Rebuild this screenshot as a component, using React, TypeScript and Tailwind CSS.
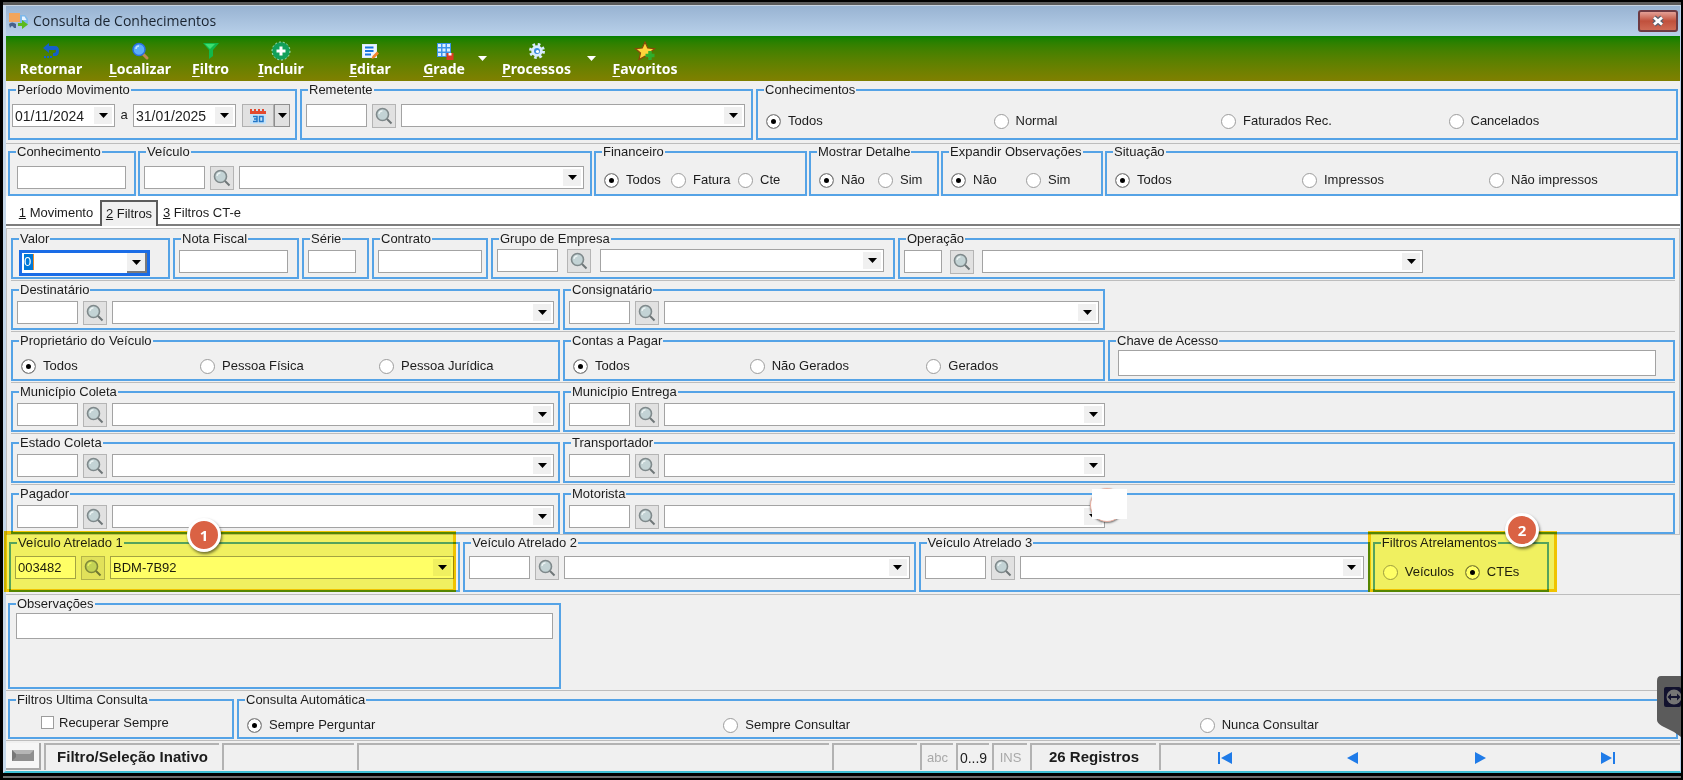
import type { ReactNode } from "react";
import clsx from "clsx";

interface GroupProps {
  title: string;
  className?: string;
  children?: ReactNode;
}

function Group({ title, className, children }: GroupProps) {
  return (
    <fieldset className={clsx("relative min-w-0 border-2 border-[#55a3e6]", className)}>
      <legend className="ml-1.5 px-px leading-4 whitespace-nowrap">{title}</legend>
      {children}
    </fieldset>
  );
}

function Arrow({ className = "text-black" }: { className?: string }) {
  return (
    <svg width="9" height="5" viewBox="0 0 9 5" className={className} aria-hidden="true">
      <path d="M0 0H9L4.5 5Z" fill="currentColor" />
    </svg>
  );
}

interface TextBoxProps {
  label: string;
  value?: string;
  className?: string;
}

function TextBox({ label, value = "", className }: TextBoxProps) {
  return (
    <input
      type="text"
      aria-label={label}
      defaultValue={value}
      className={clsx("h-[23px] min-w-0 border border-[#a3a3a3] bg-white px-0.5 outline-none", className)}
    />
  );
}

function Combo({ label, value = "", className }: TextBoxProps) {
  return (
    <div className={clsx("relative h-[23px] min-w-0", className)}>
      <select
        aria-label={label}
        className="h-full w-full appearance-none border border-[#a3a3a3] bg-white px-0.5 leading-5 outline-none"
      >
        <option>{value}</option>
      </select>
      <span className="pointer-events-none absolute top-[3px] right-[3px] flex h-[17px] w-[18px] items-center justify-center bg-[#f0f0f0]">
        <Arrow />
      </span>
    </div>
  );
}

function SearchButton({ label }: { label: string }) {
  return (
    <button
      type="button"
      aria-label={`Pesquisar ${label}`}
      className="flex size-6 shrink-0 items-center justify-center border border-[#b4b4b4] bg-[#e1e1e1]"
    >
      <svg width="20" height="20" viewBox="0 0 20 20" aria-hidden="true">
        <path d="M12.5 12.5L17.5 17.5" stroke="#6f7678" strokeWidth="2" />
        <circle cx="8.5" cy="8.5" r="6" fill="#c3d3d5" stroke="#7f898b" strokeWidth="1.6" />
        <path d="M5 8A3.6 3.6 0 0 1 8.5 4.8" stroke="#eef5f5" strokeWidth="1.2" fill="none" />
      </svg>
    </button>
  );
}

interface LookupProps {
  label: string;
  code?: string;
  value?: string;
  className?: string;
  codeClass?: string;
  comboClass?: string;
}

function Lookup({
  label,
  code,
  value,
  className = "gap-[5px]",
  codeClass = "w-[61px]",
  comboClass = "flex-1",
}: LookupProps) {
  return (
    <div className={clsx("flex items-start px-1", className)}>
      <TextBox label={`${label} código`} value={code} className={clsx("shrink-0", codeClass)} />
      <SearchButton label={label} />
      <Combo label={label} value={value} className={comboClass} />
    </div>
  );
}

interface RadiosProps {
  name: string;
  options: string[];
  selected?: number;
  className: string;
}

function Radios({ name, options, selected = 0, className }: RadiosProps) {
  return (
    <div className={clsx("grid auto-cols-fr grid-flow-col pl-2", className)}>
      {options.map((option, i) => (
        <label key={option} className="flex h-4 items-center gap-[7px] whitespace-nowrap">
          <input
            type="radio"
            name={name}
            defaultChecked={i === selected}
            className="size-[15px] shrink-0 appearance-none rounded-full border border-[#9c9c9c] bg-white checked:bg-black checked:shadow-[inset_0_0_0_4px_#fff]"
          />
          {option}
        </label>
      ))}
    </div>
  );
}

function Callout({ n, className }: { n: number; className: string }) {
  return (
    <span
      className={clsx(
        "absolute z-20 flex size-[34px] items-center justify-center rounded-full border-[3px] border-white bg-[#da6244] font-['Open_Sans',sans-serif] text-[15px] font-bold text-white shadow-[1px_2px_3px_#0008]",
        className
      )}
    >
      {n}
    </span>
  );
}

function Rule() {
  return <div className="h-px bg-[#bdbdbd]" />;
}

const icons = {
  retornar: (
    <svg width="20" height="20" viewBox="0 0 20 20">
      <path d="M2 7L8 2V5H14Q18 5 18 10T14 15H12V12H13Q15 12 15 10T13 9H8V12Z" fill="#1560c8" />
      <path d="M3 16H12" stroke="#1560c8" strokeWidth="2" strokeDasharray="2 1" />
    </svg>
  ),
  localizar: (
    <svg width="20" height="20" viewBox="0 0 20 20">
      <path d="M12 12L17 17" stroke="#c08a52" strokeWidth="3" strokeLinecap="round" />
      <circle cx="9" cy="8.5" r="6" fill="#5aaef8" stroke="#2a6fe0" strokeWidth="1.5" />
      <path d="M6 8A3 3 0 0 1 9 5" stroke="#bfe0ff" strokeWidth="1.5" fill="none" />
    </svg>
  ),
  filtro: (
    <svg width="20" height="20" viewBox="0 0 20 20">
      <path d="M2 2H18L12 9V15L8 18V9Z" fill="#12b84a" />
      <path d="M4 3H14L9 8Z" fill="#3ce070" />
    </svg>
  ),
  incluir: (
    <svg width="20" height="20" viewBox="0 0 20 20">
      <circle cx="10" cy="10" r="9" fill="#12a05a" stroke="#a7e3c0" strokeWidth="1" strokeDasharray="2 2" />
      <path d="M10 5.5V14.5M5.5 10H14.5" stroke="#fff" strokeWidth="3" />
    </svg>
  ),
  editar: (
    <svg width="20" height="20" viewBox="0 0 20 20">
      <rect x="2.5" y="3.500" width="14" height="13" fill="#eef6ff" stroke="#dcecff" />
      <path d="M5 6.500H13.500M5 13.500H11M5 10H13.500" stroke="#1976e0" strokeWidth="2" />
      <path d="M11.500 18L12.500 15L17 10.500L19 12.500L14.500 17Z" fill="#f2862c" />
    </svg>
  ),
  grade: (
    <svg width="20" height="20" viewBox="0 0 20 20">
      <rect x="3" y="2" width="14" height="14" fill="#3c94ea" />
      <path
        d="M4 3h3v3H4zM8.5 3h3v3h-3zM13 3h3v3h-3zM4 7.5h3v3H4zM8.5 7.5h3v3h-3zM13 7.5h3v3h-3zM4 12h3v3H4zM8.5 12h3v3h-3z"
        fill="#dcefff"
      />
      <rect x="12.500" y="12" width="7" height="7" fill="#dc3b22" />
      <path d="M14.500 12H17.500V14.500H14.500Z" fill="#fff" />
    </svg>
  ),
  processos: (
    <svg width="20" height="20" viewBox="0 0 20 20">
      <circle cx="10" cy="10" r="6.500" fill="none" stroke="#d8ecff" strokeWidth="3" strokeDasharray="2.550 2.550" />
      <circle cx="10" cy="10" r="4" fill="none" stroke="#d8ecff" strokeWidth="3.500" />
      <circle cx="10" cy="10" r="3" fill="#3b8ce0" />
      <circle cx="10.500" cy="10.500" r="1.600" fill="#fff" />
    </svg>
  ),
  favoritos: (
    <svg width="22" height="20" viewBox="0 0 22 20">
      <path
        d="M11 1L13.700 7L20.500 7.700L15.500 12L17 18.500L11 15.200L5 18.500L6.500 12L1.500 7.700L8.300 7Z"
        fill="#ffd43a"
        stroke="#8a4a08"
        strokeWidth="1.200"
      />
      <path d="M16 10V19M11.500 14.500H20.500" stroke="#2fae2c" strokeWidth="3.500" />
    </svg>
  ),
};

interface ToolProps {
  icon: ReactNode;
  hot?: string;
  text: string;
  className: string;
}

function Tool({ icon, hot, text, className }: ToolProps) {
  return (
    <button type="button" className={clsx("flex shrink-0 flex-col items-center pt-[5px]", className)}>
      {icon}
      <span className="leading-4">
        {hot && <u className="underline-offset-2">{hot}</u>}
        {text}
      </span>
    </button>
  );
}

function ToolArrow({ label }: { label: string }) {
  return (
    <button type="button" aria-label={label} className="flex w-[18px] shrink-0 items-center justify-center">
      <Arrow className="text-white" />
    </button>
  );
}

function TitleBar() {
  return (
    <header className="flex h-[30px] items-center bg-linear-to-b from-[#98b3d2] to-[#b9d1ea] pr-0.5 pl-[3px]">
      <svg width="20" height="18" viewBox="0 0 20 18" aria-hidden="true">
        <rect x="0" y="1" width="11" height="9" fill="#f2a55c" />
        <path d="M11 3H16L19 7V12H11Z" fill="#7db8ea" />
        <path d="M13 4.5H15.5L17.5 8H13Z" fill="#e8f4ff" />
        <path d="M0 12Q3 9 7 12V16H5Q3 12 1 16Z" fill="#47618a" />
        <path d="M9 11H13V8L19 12.5L13 17V14H9Z" fill="#5cba1c" />
      </svg>
      <h1 className="ml-1 flex-1 font-['Open_Sans',sans-serif] text-sm text-[#1a2430]">
        Consulta de Conhecimentos
      </h1>
      <button
        type="button"
        aria-label="Fechar"
        className="flex h-[22px] w-10 items-center justify-center rounded-[3px] border-2 border-[#6d3a42] bg-linear-to-b from-[#e3a096] via-[#c0503c] to-[#cf6a55]"
      >
        <svg width="14" height="12" viewBox="0 0 14 12" aria-hidden="true">
          <path d="M3 2.5L11 9.5M11 2.5L3 9.5" stroke="#56606e" strokeWidth="5" />
          <path d="M3 2.5L11 9.5M11 2.5L3 9.5" stroke="#fff" strokeWidth="2.8" />
        </svg>
      </button>
    </header>
  );
}

function Toolbar() {
  return (
    <div className="flex h-[45px] items-stretch bg-linear-to-b from-[#008000] to-[#808000] font-['Noto_Sans',sans-serif] text-sm font-bold text-white">
      <Tool icon={icons.retornar} text="Retornar" className="w-[90px]" />
      <Tool icon={icons.localizar} hot="L" text="ocalizar" className="w-[88px]" />
      <Tool icon={icons.filtro} hot="F" text="iltro" className="w-[53px]" />
      <Tool icon={icons.incluir} hot="I" text="ncluir" className="w-[88px]" />
      <Tool icon={icons.editar} hot="E" text="ditar" className="w-[90px]" />
      <Tool icon={icons.grade} hot="G" text="rade" className="w-[58px]" />
      <ToolArrow label="Opções de grade" />
      <Tool icon={icons.processos} hot="P" text="rocessos" className="w-[91px]" />
      <ToolArrow label="Opções de processos" />
      <Tool icon={icons.favoritos} hot="F" text="avoritos" className="w-[90px]" />
    </div>
  );
}

function HeaderFilters() {
  return (
    <>
      <div className="grid grid-cols-[289fr_453fr_922fr] gap-[3px] px-0.5 pt-px pb-[3px]">
        <Group title="Período Movimento" className="h-[58px]">
          <div className="flex items-start px-0.5 pt-1.5">
            <Combo label="Data inicial" value="01/11/2024" className="w-[103px] text-sm" />
            <span className="w-[18px] text-center leading-[22px]">a</span>
            <Combo label="Data final" value="31/01/2025" className="w-[103px] text-sm" />
            <button
              type="button"
              aria-label="Calendário"
              className="ml-1.5 flex h-[23px] w-8 items-center justify-center border border-[#b0b0b0] bg-[#e1e1e1]"
            >
              <svg width="16" height="16" viewBox="0 0 16 16" aria-hidden="true">
                <rect x="0" y="2" width="16" height="14" fill="#c4e2f8" />
                <path d="M0 1H2V3H4V1H6V3H8V1H10V3H12V1H14V3H16V6H0Z" fill="#e2492f" />
                <path
                  d="M3 8.5H7V13.5H3M4 11H7M9.5 8.5H13V13.5H9.5Z"
                  fill="none"
                  stroke="#2277c8"
                  strokeWidth="1.5"
                />
              </svg>
            </button>
            <button
              type="button"
              aria-label="Opções do calendário"
              className="flex h-[23px] w-4 items-center justify-center border border-[#8f8f8f] bg-[#e1e1e1]"
            >
              <Arrow />
            </button>
          </div>
        </Group>
        <Group title="Remetente">
          <Lookup label="Remetente" className="gap-[5px] pt-1.5 pr-1.5" />
        </Group>
        <Group title="Conhecimentos">
          <Radios
            name="conhecimentos"
            options={["Todos", "Normal", "Faturados Rec.", "Cancelados"]}
            className="pt-[15px]"
          />
        </Group>
      </div>
      <Rule />
      <div className="grid grid-cols-[128fr_454fr_213fr_130fr_162fr_573fr] gap-0.5 px-0.5">
        <Group title="Conhecimento" className="h-[52px]">
          <div className="flex px-[7px] pt-1.5">
            <TextBox label="Conhecimento" className="w-[109px]" />
          </div>
        </Group>
        <Group title="Veículo">
          <Lookup label="Veículo" className="gap-[5px] pt-1.5 pr-1.5" />
        </Group>
        <Group title="Financeiro">
          <Radios name="financeiro" options={["Todos", "Fatura", "Cte"]} className="pt-3" />
        </Group>
        <Group title="Mostrar Detalhe">
          <Radios name="detalhe" options={["Não", "Sim"]} className="pt-3" />
        </Group>
        <Group title="Expandir Observações">
          <Radios name="expandir" options={["Não", "Sim"]} className="pt-3" />
        </Group>
        <Group title="Situação">
          <Radios name="situacao" options={["Todos", "Impressos", "Não impressos"]} className="pt-3" />
        </Group>
      </div>
    </>
  );
}

function Tabs() {
  return (
    <div role="tablist" className="flex h-[30px] items-end bg-white shadow-[inset_0_-2px_0_#7d7d7d]">
      <button type="button" role="tab" className="h-[26px] w-[94px] pl-1.5 whitespace-nowrap">
        <u>1</u> Movimento
      </button>
      <button
        type="button"
        role="tab"
        aria-selected="true"
        className="h-[26px] w-[58px] border-2 border-b-0 border-[#5c5c5c] bg-[#f0f0f0] whitespace-nowrap"
      >
        <u>2</u> Filtros
      </button>
      <button type="button" role="tab" className="h-[26px] w-[88px] whitespace-nowrap">
        <u>3</u> Filtros CT-e
      </button>
    </div>
  );
}

function FilterTab() {
  return (
    <div className="border-t-2 border-white">
      <div className="flex flex-col gap-px border border-[#c2c2c2] px-1 pt-0.5">
        <div className="grid grid-cols-[159fr_126fr_67fr_116fr_404fr_777fr] gap-[3px]">
          <Group title="Valor" className="h-12">
            <div className="mt-[3px] ml-1.5 flex h-[26px] w-[131px] items-start border-3 border-[#1a6ce6] bg-white">
              <input
                type="text"
                aria-label="Valor"
                defaultValue="0"
                className="mt-px ml-0.5 h-4 w-2.5 border-r border-[#f08a24] bg-[#0078d7] text-white outline-none"
              />
              <button
                type="button"
                aria-label="Abrir valor"
                className="ml-auto flex h-5 w-5 items-center justify-center border-r-2 border-b-2 border-[#7a7a7a] bg-[#f0f0f0]"
              >
                <Arrow />
              </button>
            </div>
          </Group>
          <Group title="Nota Fiscal">
            <div className="flex px-1 pt-[3px]">
              <TextBox label="Nota Fiscal" className="w-[109px]" />
            </div>
          </Group>
          <Group title="Série">
            <div className="flex px-1 pt-[3px]">
              <TextBox label="Série" className="w-12" />
            </div>
          </Group>
          <Group title="Contrato">
            <div className="flex px-1 pt-[3px]">
              <TextBox label="Contrato" className="w-[104px]" />
            </div>
          </Group>
          <Group title="Grupo de Empresa">
            <Lookup label="Grupo de Empresa" className="gap-[9px] pt-0.5 pr-[9px]" />
          </Group>
          <Group title="Operação">
            <Lookup
              label="Operação"
              className="gap-2 pt-[3px]"
              codeClass="w-[38px]"
              comboClass="w-[441px]"
            />
          </Group>
        </div>
        <Rule />
        <div className="grid grid-cols-[549fr_542fr_567fr] gap-[3px]">
          <Group title="Destinatário" className="h-12">
            <Lookup label="Destinatário" className="gap-[5px] pt-[3px]" />
          </Group>
          <Group title="Consignatário">
            <Lookup label="Consignatário" className="gap-[5px] pt-[3px]" />
          </Group>
        </div>
        <Rule />
        <div className="grid grid-cols-[549fr_542fr_567fr] gap-[3px]">
          <Group title="Proprietário do Veículo" className="h-12">
            <Radios
              name="proprietario"
              options={["Todos", "Pessoa Física", "Pessoa Jurídica"]}
              className="pt-[9px]"
            />
          </Group>
          <Group title="Contas a Pagar">
            <Radios name="contas" options={["Todos", "Não Gerados", "Gerados"]} className="pt-[9px]" />
          </Group>
          <Group title="Chave de Acesso">
            <div className="flex pt-px pr-[17px] pl-2">
              <TextBox label="Chave de Acesso" className="h-[26px] flex-1" />
            </div>
          </Group>
        </div>
        <Rule />
        <div className="grid grid-cols-[549fr_1112fr] gap-[3px]">
          <Group title="Município Coleta" className="h-12">
            <Lookup label="Município Coleta" className="gap-[5px] pt-[3px]" />
          </Group>
          <Group title="Município Entrega">
            <Lookup label="Município Entrega" className="gap-[5px] pt-[3px]" comboClass="w-[441px]" />
          </Group>
        </div>
        <Rule />
        <div className="grid grid-cols-[549fr_1112fr] gap-[3px]">
          <Group title="Estado Coleta" className="h-12">
            <Lookup label="Estado Coleta" className="gap-[5px] pt-[3px]" />
          </Group>
          <Group title="Transportador">
            <Lookup label="Transportador" className="gap-[5px] pt-[3px]" comboClass="w-[441px]" />
          </Group>
        </div>
        <Rule />
        <div className="grid grid-cols-[549fr_1112fr] gap-[3px]">
          <Group title="Pagador" className="h-12">
            <Lookup label="Pagador" className="gap-[5px] pt-[3px]" />
          </Group>
          <Group title="Motorista">
            <Lookup label="Motorista" className="gap-[5px] pt-[3px]" comboClass="w-[441px]" />
            {/* blank patch with the rim of the badge under it */}
            <span className="absolute -top-3.5 left-[525px] size-[34px] rounded-full border border-[#e8b0a2] bg-white shadow-[0_1px_2px_#0008]" />
            <span className="absolute -top-[13px] left-[527px] h-[30px] w-[35px] bg-white" />
          </Group>
        </div>
      </div>
    </div>
  );
}

function Trailers() {
  return (
    <div className="grid grid-cols-[451fr_452fr_451fr_176fr_123fr] gap-[3px] pr-[5px] pb-0.5 pl-[3px]">
      <Group title="Veículo Atrelado 1" className="h-[57px]">
        <Lookup
          label="Veículo Atrelado 1"
          code="003482"
          value="BDM-7B92"
          className="gap-[5px] pt-[5px]"
        />
        <span className="pointer-events-none absolute -top-5 right-0.5 -bottom-0.5 -left-[7px] z-10 border-3 border-[#ffd000] bg-[#ffff66] mix-blend-multiply" />
        <Callout n={1} className="-top-[33px] left-[176px]" />
      </Group>
      <Group title="Veículo Atrelado 2">
        <Lookup label="Veículo Atrelado 2" className="gap-[5px] pt-[5px]" />
      </Group>
      <Group title="Veículo Atrelado 3">
        <Lookup label="Veículo Atrelado 3" className="gap-[5px] pt-[5px]" />
      </Group>
      <Group title="Filtros Atrelamentos">
        <Radios name="atrelamentos" options={["Veículos", "CTEs"]} selected={1} className="pt-[13px]" />
        <span className="pointer-events-none absolute -top-5 -right-2.5 -bottom-0.5 -left-[7px] z-10 border-3 border-[#ffd000] bg-[#ffff66] mix-blend-multiply" />
        <Callout n={2} className="-top-[38px] right-2" />
      </Group>
    </div>
  );
}

function FooterFilters() {
  return (
    <>
      <Rule />
      <div className="grid grid-cols-[553fr_1117fr] px-0.5 pt-px">
        <Group title="Observações" className="h-[93px]">
          <div className="flex px-1.5 pt-px">
            <TextBox label="Observações" className="h-[26px] flex-1" />
          </div>
        </Group>
      </div>
      <div className="pt-px">
        <Rule />
      </div>
      <div className="grid grid-cols-[226fr_1441fr] gap-[3px] px-0.5 py-px">
        <Group title="Filtros Ultima Consulta" className="h-[47px]">
          <label className="ml-[31px] flex h-4 items-center gap-[5px] pt-[13px]">
            <input
              type="checkbox"
              className="size-[13px] appearance-none border border-[#9c9c9c] bg-white checked:bg-[#0078d7]"
            />
            Recuperar Sempre
          </label>
        </Group>
        <Group title="Consulta Automática">
          <Radios
            name="consulta"
            options={["Sempre Perguntar", "Sempre Consultar", "Nunca Consultar"]}
            className="pt-[9px]"
          />
        </Group>
      </div>
      <Rule />
    </>
  );
}

function Cell({ className, children }: { className?: string; children?: ReactNode }) {
  return (
    <div
      className={clsx(
        "flex min-w-0 items-center justify-center border-t-2 border-l-2 border-[#b2b2b2] whitespace-nowrap",
        className
      )}
    >
      {children}
    </div>
  );
}

const navigation = [
  { label: "Primeiro", path: "M1 1H3V13H1ZM15 1V13L4 7Z" },
  { label: "Anterior", path: "M13 1V13L2 7Z" },
  { label: "Próximo", path: "M3 1V13L14 7Z" },
  { label: "Último", path: "M1 1V13L12 7ZM13 1H15V13H13Z" },
];

function StatusBar() {
  return (
    <footer className="grid h-[30px] grid-cols-[35fr_175fr_132fr_472fr_85fr_33fr_33fr_35fr_126fr_521fr] gap-[3px] pt-0.5 pb-px">
      <div className="flex items-center justify-center border-r-2 border-b-2 border-[#a8a8a8] bg-[#f6f6f6]">
        <svg width="22" height="11" viewBox="0 0 22 11" aria-hidden="true">
          <rect width="22" height="11" fill="#8f8f8f" />
          <path d="M0 0H22L18 4H4Z" fill="#b5b5b5" />
          <path d="M0 0L4 4V7L0 11Z" fill="#777" />
        </svg>
      </div>
      <Cell className="text-[15px] font-bold">Filtro/Seleção Inativo</Cell>
      <Cell />
      <Cell />
      <Cell />
      <Cell className="text-[#a8a8a8]">abc</Cell>
      <Cell className="text-sm">0...9</Cell>
      <Cell className="text-[#a8a8a8]">INS</Cell>
      <Cell className="text-[15px] font-bold">26 Registros</Cell>
      <Cell className="pr-2">
        {navigation.map(({ label, path }) => (
          <button key={label} type="button" aria-label={label} className="flex flex-1 justify-center">
            <svg width="16" height="14" viewBox="0 0 16 14" aria-hidden="true">
              <path d={path} fill="#1f7be8" />
            </svg>
          </button>
        ))}
      </Cell>
    </footer>
  );
}

export default function App() {
  return (
    <div className="relative min-h-screen overflow-hidden bg-black pt-0.5 pr-0.5 pb-px pl-[3px] font-['Liberation_Sans',Arial,sans-serif] text-[13px] text-[#1c1c1c]">
      <div className="border-t-3 border-[#5a5a5a]">
        <main className="border-t border-r border-b-2 border-l-3 border-t-[#c8d4e2] border-r-[#b9d1ea] border-b-[#3fc0d4] border-l-[#c6d8ea] bg-[#f0f0f0]">
          <TitleBar />
          <Toolbar />
          <HeaderFilters />
          <Tabs />
          <FilterTab />
          <Trailers />
          <FooterFilters />
          <StatusBar />
        </main>
      </div>
      <div className="mt-[3px] h-0.5 bg-[#6e6e6e]" />

      {/* remote session handle docked on the right edge */}
      <button
        type="button"
        aria-label="Painel remoto"
        className="absolute top-[676px] right-0.5 z-20 h-[61px] w-6"
      >
        <svg width="24" height="61" viewBox="0 0 24 61" aria-hidden="true">
          <path d="M4 0H24V61L17 56L5 50Q0 47 0 44V5Q0 0 4 0Z" fill="#5b5b5b" />
          <rect x="7" y="11" width="17" height="20" rx="2" fill="#12122e" />
          <circle cx="17" cy="21" r="7.5" fill="#747474" />
          <path d="M10.5 21L14 17.5V20H20V17.5L23.5 21L20 24.5V22H14V24.5Z" fill="#12122e" />
        </svg>
      </button>
    </div>
  );
}
